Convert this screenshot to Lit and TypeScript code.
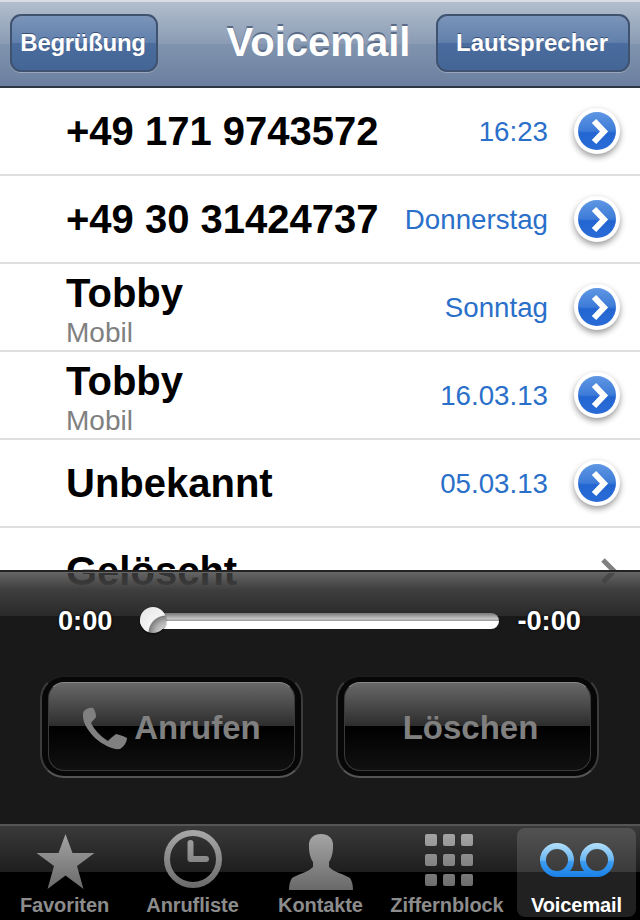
import { LitElement, html, css, svg } from 'lit';
import { customElement } from 'lit/decorators.js';

const ROWS = [
  { name: '+49 171 9743572', sub: '', time: '16:23' },
  { name: '+49 30 31424737', sub: '', time: 'Donnerstag' },
  { name: 'Tobby', sub: 'Mobil', time: 'Sonntag' },
  { name: 'Tobby', sub: 'Mobil', time: '16.03.13' },
  { name: 'Unbekannt', sub: '', time: '05.03.13' },
];

const tabGrad = svg`
  <defs>
    <linearGradient id="g" gradientUnits="userSpaceOnUse" x1="0" y1="0" x2="0" y2="60">
      <stop offset="0" stop-color="#a6a6a6" />
      <stop offset="1" stop-color="#666" />
    </linearGradient>
  </defs>
`;

const key = (x: number, y: number) => svg`<rect x=${x} y=${y} width="12" height="12" rx="2" fill="url(#g)" />`;

const TABS = [
  {
    label: 'Favoriten',
    w: 60,
    icon: svg`${tabGrad}<path fill="url(#g)" d="M30.5 2 L37.5 21 L59.5 21 L42 34 L48.5 57 L30.5 43.5 L12.5 57 L19 34 L1.5 21 L23.5 21 Z" />`,
  },
  {
    label: 'Anrufliste',
    w: 60,
    icon: svg`
      ${tabGrad}
      <circle cx="30" cy="27" r="26" fill="none" stroke="url(#g)" stroke-width="6" />
      <path fill="none" stroke="url(#g)" stroke-width="6" stroke-linecap="round" stroke-linejoin="round" d="M27.5 11 V27 H43" />`,
  },
  {
    label: 'Kontakte',
    w: 64,
    icon: svg`
      ${tabGrad}
      <path fill="url(#g)" transform="translate(0 1)" d="M32 1 C39 1 45 5 44 14 C44 21 42 26 40 29 L40 34 C46 40 55 41 61 45 C63 48 64 52 64 57 L0 57 C0 52 1 48 3 45 C9 41 18 40 24 34 L24 29 C22 26 20 21 20 14 C19 5 25 1 32 1 Z" />`,
  },
  {
    label: 'Ziffernblock',
    w: 60,
    keypad: true,
    icon: svg`
      ${tabGrad}
      ${[2, 22, 42].map((y) => [6, 24, 42].map((x) => key(x, y)))}`,
  },
  {
    label: 'Voicemail',
    w: 74,
    active: true,
    icon: svg`
      <defs>
        <linearGradient id="v" gradientUnits="userSpaceOnUse" x1="0" y1="11" x2="0" y2="45">
          <stop offset="0" stop-color="#b5e0fa" />
          <stop offset=".5" stop-color="#69b6f2" />
          <stop offset=".55" stop-color="#3c9cf0" />
          <stop offset="1" stop-color="#1a80e8" />
        </linearGradient>
      </defs>
      <path fill="none" stroke="url(#v)" stroke-width="6" d="M17 42 A14 14 0 1 1 17 14 A14 14 0 1 1 17 42 H57 A14 14 0 1 1 57 14 A14 14 0 1 1 57 42" />`,
  },
];

@customElement('app-root')
export class AppRoot extends LitElement {
  static styles = css`
    :host {
      display: block;
      width: 640px;
      height: 920px;
      font-family: 'Liberation Sans', Arial, sans-serif;
    }
    .screen {
      position: relative;
      display: flex;
      flex-direction: column;
      height: 920px;
      overflow: hidden;
      background: #fff;
    }

    .nav {
      flex: none;
      box-sizing: border-box;
      height: 88px;
      display: grid;
      grid-template-columns: 1fr auto 1fr;
      align-items: center;
      padding: 0 10px;
      border-top: 2px solid #d9dde2;
      border-bottom: 2px solid #2d3642;
      background: linear-gradient(#b2becd, #8a9bb4 50%, #8194ae 50%, #6b7fa0);
    }
    .nav h1 {
      margin: 0 0 4px -3px;
      font-size: 40px;
      line-height: 1;
      font-weight: 700;
      color: #fff;
      text-shadow: 0 -2px 0 #5a6b85;
    }
    .nav-btn {
      box-sizing: border-box;
      height: 58px;
      margin-bottom: 2px;
      padding-right: 2px;
      display: flex;
      align-items: center;
      justify-content: center;
      border: 2px solid #3f5270;
      border-radius: 11px;
      font-size: 24px;
      font-weight: 700;
      color: #fff;
      text-shadow: 0 -1px 0 #3a5075;
      background: linear-gradient(#7b94b9, #5f7fab 50%, #4a6c9e 50%, #446696);
      box-shadow: 0 1px 0 rgba(255, 255, 255, 0.28);
    }
    .nav-btn.left {
      justify-self: start;
      width: 148px;
      letter-spacing: -0.3px;
    }
    .nav-btn.right {
      justify-self: end;
      width: 194px;
    }

    .list {
      flex: 1;
      min-height: 0;
    }
    .row {
      box-sizing: border-box;
      height: 88px;
      display: flex;
      align-items: center;
      padding: 0 20px 0 66px;
      border-bottom: 2px solid #e0e0e0;
    }
    .who {
      flex: 1;
      min-width: 0;
    }
    .who.two {
      margin-top: -1px;
    }
    .name {
      font-size: 40px;
      line-height: 44px;
      font-weight: 700;
      color: #000;
    }
    .sub {
      font-size: 28px;
      line-height: 26px;
      color: #808080;
      margin: 5px 0 -4px;
    }
    .when {
      font-size: 27.7px;
      color: #2a6fc9;
      margin: 2px 26px 0 0;
    }
    .disclosure {
      flex: none;
      width: 46px;
      height: 46px;
      margin-bottom: 1px;
      filter: drop-shadow(0 3px 3px rgba(0, 0, 0, 0.4));
    }
    .plain-chevron {
      flex: none;
      width: 18px;
      height: 26px;
      margin-right: 2px;
    }

    .player {
      position: absolute;
      left: 0;
      right: 0;
      top: 570px;
      height: 254px;
      box-sizing: border-box;
      border-top: 2px solid #222;
      display: flex;
      flex-direction: column;
      background: linear-gradient(
        rgba(62, 62, 62, 0.8),
        rgba(62, 62, 62, 1) 18px,
        #2a2a2a 44px,
        #191919 44px,
        #191919
      );
      box-shadow: inset 0 1px 0 #666;
    }
    .scrub {
      display: flex;
      align-items: center;
      height: 54px;
      margin-top: 22px;
      padding-left: 58px;
      color: #fff;
      font-size: 27.2px;
      font-weight: 700;
      text-shadow: 0 0 3px #000;
    }
    .track {
      position: relative;
      width: 359px;
      height: 16px;
      margin: 0 18px 0 28px;
      border-radius: 8px;
      background: linear-gradient(#777, #c4c4c4 35%, #999 50%, #fff 50%, #fff);
    }
    .knob {
      position: absolute;
      left: 0;
      top: -6px;
      width: 26px;
      height: 26px;
      border-radius: 50%;
      background: radial-gradient(circle at 100% 100%, #e8e8e8 0, #b0b0b0 30%, #7e7e7e 46%, #f4f4f4 49%, #e4e4e4 100%);
      box-shadow: 0 1px 2px rgba(0, 0, 0, 0.7);
    }
    .actions {
      display: flex;
      justify-content: center;
      gap: 33px;
      margin: 27px 0 0 -1px;
    }
    .well {
      box-sizing: border-box;
      width: 263px;
      height: 103px;
      padding: 5px 6px;
      border-radius: 24px;
      background: #070707;
      border: 2px solid #555;
      border-top-color: #1c1c1c;
      border-left-color: #3c3c3c;
      border-right-color: #3c3c3c;
    }
    .action {
      box-sizing: border-box;
      height: 89px;
      padding-top: 2px;
      display: flex;
      align-items: center;
      justify-content: center;
      gap: 6px;
      border-radius: 16px;
      border: 1px solid #3a3a3a;
      border-top-color: #8a8a8a;
      font-size: 33px;
      font-weight: 700;
      color: #808080;
      background: linear-gradient(#686868, #2c2c2c 50%, #000 50%, #111);
    }
    .action.delete {
      padding-left: 6px;
    }
    .action svg {
      width: 60px;
      height: 60px;
      margin: 3px -7px 0 -7px;
    }

    .tabs {
      flex: none;
      box-sizing: border-box;
      height: 96px;
      display: grid;
      grid-template-columns: repeat(5, 1fr);
      border-top: 2px solid #555;
      background: linear-gradient(#3a3a3a, #1e1e1e 46px, #000 46px, #000);
    }
    .tab {
      display: flex;
      flex-direction: column;
      align-items: center;
      margin: 2px 4px 5px 5px;
      border-radius: 8px;
      font-size: 20px;
      font-weight: 700;
      line-height: 24px;
      letter-spacing: -0.1px;
      color: #8c8c8c;
    }
    .tab svg {
      margin-top: 4px;
      flex: none;
      overflow: visible;
    }
    .tab span {
      margin-top: 1px;
      white-space: nowrap;
    }
    .tab.keypad span {
      margin-right: 3px;
    }
    .tab.active {
      color: #fff;
      background: rgba(255, 255, 255, 0.13);
    }
  `;

  private disclosure() {
    return html`<svg class="disclosure" viewBox="0 0 46 46">
      <defs>
        <linearGradient id="b" x1="0" y1="0" x2="0" y2="1">
          <stop offset="0" stop-color="#5f97e2" />
          <stop offset="0.5" stop-color="#3d7bd8" />
          <stop offset="0.55" stop-color="#2265d2" />
          <stop offset="1" stop-color="#2a6cd6" />
        </linearGradient>
      </defs>
      <circle cx="23" cy="23" r="23" fill="#fff" />
      <circle cx="23" cy="23" r="19" fill="url(#b)" />
      <path d="M20 13 L30 23.5 L20 34" fill="none" stroke="#fff" stroke-width="6" />
    </svg>`;
  }

  private row(r: { name: string; sub: string; time: string }) {
    return html`<div class="row">
      <div class="who ${r.sub ? 'two' : ''}">
        <div class="name">${r.name}</div>
        ${r.sub ? html`<div class="sub">${r.sub}</div>` : ''}
      </div>
      <div class="when">${r.time}</div>
      ${this.disclosure()}
    </div>`;
  }

  render() {
    return html`<div class="screen">
      <header class="nav">
        <div class="nav-btn left">Begrüßung</div>
        <h1>Voicemail</h1>
        <div class="nav-btn right">Lautsprecher</div>
      </header>

      <section class="list">
        ${ROWS.map((r) => this.row(r))}
        <div class="row">
          <div class="who"><div class="name">Gelöscht</div></div>
          <svg class="plain-chevron" viewBox="0 0 18 26">
            <path d="M3 2 L14 13 L3 24" fill="none" stroke="#808080" stroke-width="5" />
          </svg>
        </div>
      </section>

      <section class="player">
        <div class="scrub">
          <span>0:00</span>
          <div class="track"><div class="knob"></div></div>
          <span>-0:00</span>
        </div>
        <div class="actions">
          <div class="well">
            <div class="action">
              <svg viewBox="0 0 60 60">
                <path fill="#808080" d="M9 12 C11 10 15 8 18 9 C20 11 21 15 21 18 C20 20 17 22 16 24 C19 30 25 37 33 42 C35 40 38 37 41 35 C45 36 49 37 52 39 C52 42 50 47 45 50 C38 51 28 46 20 39 C13 32 8 24 8 17 C8 15 8 13 9 12 Z" />
              </svg>
              Anrufen
            </div>
          </div>
          <div class="well"><div class="action delete">Löschen</div></div>
        </div>
      </section>

      <nav class="tabs">
        ${TABS.map(
          (t) => html`<div class="tab ${t.active ? 'active' : ''} ${t.keypad ? 'keypad' : ''}">
            <svg width=${t.w} height="60" viewBox="0 0 ${t.w} 60">${t.icon}</svg>
            <span>${t.label}</span>
          </div>`
        )}
      </nav>
    </div>`;
  }
}
